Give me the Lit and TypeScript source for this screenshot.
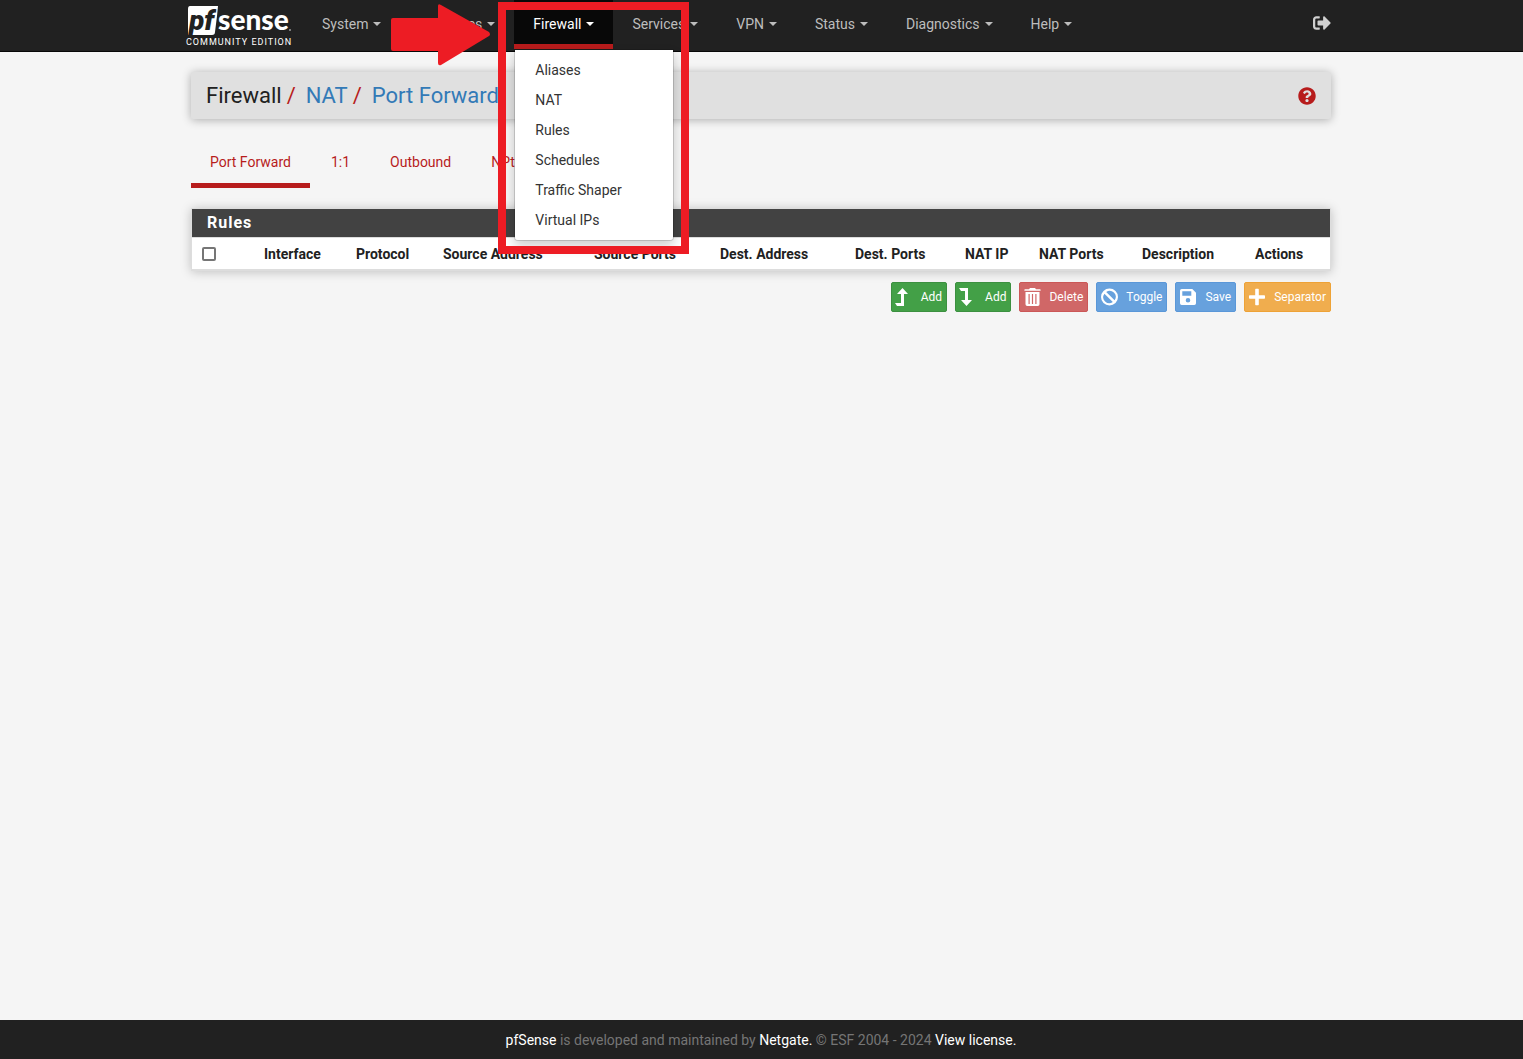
import { LitElement, html, css, svg } from "lit";
import { customElement } from "lit/decorators.js";

const icons = {
  up: svg`<path d="M6.500 0 12 6H8v12H1l-2-3H5V6H1z"/>`,
  down: svg`<path d="M-1 0H8v12h4l-5.500 6L1 12h4V3H1z"/>`,
  trash: svg`<path fill-rule="evenodd" d="M6 0h5l1 1.200h4a.6.6 0 0 1 .6.6v1H.4v-1A.6.6 0 0 1 1 1.200h4zM1.500 4h14v12.300a1.700 1.700 0 0 1-1.700 1.700H3.200a1.700 1.700 0 0 1-1.700-1.700zM4.500 6v10h1.200V6zM7.900 6v10h1.200V6zM11.300 6v10h1.200V6z"/>`,
  ban: svg`<path fill-rule="evenodd" d="M9 0a9 9 0 1 1 0 18A9 9 0 0 1 9 0zM5.500 3.600l8.900 8.900A6.400 6.400 0 0 0 5.500 3.600zM3.600 5.500a6.400 6.400 0 0 0 8.900 8.900z"/>`,
  save: svg`<path fill-rule="evenodd" d="M1.700 1h10.600L16 4.700v10.600a1.700 1.700 0 0 1-1.700 1.700H1.700A1.700 1.700 0 0 1 0 15.300V2.700A1.700 1.700 0 0 1 1.700 1zM2.300 3.300v4.400h9V3.300zM8 10a2.300 2.300 0 1 0 0 4.600A2.300 2.300 0 0 0 8 10z"/>`,
  plus: svg`<path d="M6.200 1.500a.7.7 0 0 1 .7-.7h2.200a.7.7 0 0 1 .7.7v5.700h5.500a.7.700 0 0 1 .7.7v2.200a.7.700 0 0 1-.7.7H9.800v5.700a.7.700 0 0 1-.7.7H6.900a.7.700 0 0 1-.7-.7v-5.700H.7a.7.700 0 0 1-.7-.7V7.900a.7.700 0 0 1 .7-.7h5.500z"/>`,
};

const menus = ["System", "Interfaces", "Firewall", "Services", "VPN", "Status", "Diagnostics", "Help"];
const firewallItems = ["Aliases", "NAT", "Rules", "Schedules", "Traffic Shaper", "Virtual IPs"];
const tabs = ["Port Forward", "1:1", "Outbound", "NPt"];
const columns: [string, string][] = [
  ["iface", "Interface"],
  ["proto", "Protocol"],
  ["saddr", "Source Address"],
  ["sport", "Source Ports"],
  ["daddr", "Dest. Address"],
  ["dport", "Dest. Ports"],
  ["natip", "NAT IP"],
  ["natport", "NAT Ports"],
  ["descr", "Description"],
  ["act", "Actions"],
];
const actions: { label: string; icon: keyof typeof icons; tone: string }[] = [
  { label: "Add", icon: "up", tone: "success" },
  { label: "Add", icon: "down", tone: "success" },
  { label: "Delete", icon: "trash", tone: "danger" },
  { label: "Toggle", icon: "ban", tone: "primary" },
  { label: "Save", icon: "save", tone: "primary" },
  { label: "Separator", icon: "plus", tone: "warning" },
];

@customElement("app-root")
export class AppRoot extends LitElement {
  static styles = css`
    :host {
      display: flex;
      flex-direction: column;
      min-height: 100vh;
      background: #f5f5f5;
      color: #212121;
      font: 14px/20px Roboto, "Liberation Sans", sans-serif;
    }
    * { box-sizing: border-box; }
    a { text-decoration: none; color: inherit; }
    ul, ol { list-style: none; margin: 0; padding: 0; }
    .container { width: 100%; max-width: 1171px; margin: 0 auto; padding: 0 16px 0 15px; }

    .navbar { background: #212121; border-bottom: 1px solid #080808; color: #bdbdbd; }
    .bar { display: flex; height: 51px; padding-left: 9px; }
    .brand { display: block; flex: none; width: 108px; height: 48px; margin-right: 10px; }
    .brand svg { display: block; }
    .menus { display: flex; flex: 1; }
    .menu { position: relative; }
    .toggle {
      display: flex; align-items: center; gap: 5px; height: 49px; padding: 4px 19px 0;
      border: 0; border-bottom: 5px solid transparent; background: none;
      color: inherit; font: inherit;
    }
    .caret { border: 4px solid transparent; border-top-color: currentColor; border-bottom: 0; }
    .open .toggle { background: #080808; border-bottom-color: #b71c1c; color: #fff; }
    .dropdown {
      position: absolute; top: 49px; left: 0; z-index: 2; width: 160px; padding: 5px 0;
      background: #fff; background-clip: padding-box; border: 1px solid rgba(0, 0, 0, 0.15);
      border-radius: 0 0 4px 4px; box-shadow: 0 6px 12px rgba(0, 0, 0, 0.18); color: #333;
    }
    .dropdown a { display: block; padding: 5px 20px; }
    .frame {
      position: absolute; top: 2px; left: -16px; z-index: 3; width: 191px; height: 252px;
      border: 8px solid #ed1c24; pointer-events: none;
    }
    .arrow { position: absolute; top: 4px; left: -123px; z-index: 3; fill: #ed1c24; pointer-events: none; }
    .logout { display: flex; align-items: center; height: 46px; }
    .logout svg { display: block; fill: #d0d0d0; }

    .main { flex: 1; }
    .crumbs {
      display: flex; align-items: center; justify-content: space-between;
      height: 47px; margin-top: 20px; padding: 0 15px; background: #e0e0e0;
      border-radius: 2px; box-shadow: 0 1px 10px rgba(0, 0, 0, 0.3);
    }
    .trail { display: flex; font-size: 22px; line-height: 28px; color: #337ab7; }
    .trail li + li::before { content: "/"; color: #b71c1c; padding: 0 10px 0 5px; }
    .current { color: #212121; }
    .help svg { display: block; fill: #b71c1c; }

    .tabs { display: flex; gap: 2px; margin: 17px 0 20px; color: #b71c1c; }
    .tabs a { display: block; height: 52px; padding: 16px 19px 0; border-bottom: 5px solid transparent; }
    .tabs .active { border-bottom-color: #b71c1c; }

    .panel { border: 1px solid #ddd; border-bottom-width: 2px; background: #fff; box-shadow: 0 1px 10px rgba(0, 0, 0, 0.22); }
    .title {
      margin: 0; height: 28px; padding: 0 15px; background: #424242; color: #fff;
      font-size: 16px; line-height: 28px; font-weight: 700; letter-spacing: 1px;
    }
    .rules { width: 100%; table-layout: fixed; border-collapse: collapse; border-top: 1px solid #ddd; }
    th { height: 31px; padding: 2px 0 0 5px; text-align: left; font-weight: 700; white-space: nowrap; }
    .c-check { width: 67px; } .c-iface { width: 92px; } .c-proto { width: 87px; }
    .c-saddr { width: 151px; } .c-sport { width: 126px; } .c-daddr { width: 135px; }
    .c-dport { width: 110px; } .c-natip { width: 74px; } .c-natport { width: 103px; }
    .c-descr { width: 113px; } .c-act { width: 80px; }
    .check {
      display: block; appearance: none; width: 14px; height: 14px; margin: 0 5px;
      border: 2px solid #767676; border-radius: 2px; background: #fff;
    }

    .actions { display: flex; justify-content: flex-end; gap: 8px; margin-top: 11px; }
    .btn {
      display: flex; align-items: center; gap: 8px; height: 30px; padding: 0 4px;
      border: 1px solid; border-radius: 2px; color: #fff; font: 12px/18px Roboto, "Liberation Sans", sans-serif;
    }
    .btn svg { fill: #fff; flex: none; overflow: visible; }
    .success { background: #43a047; border-color: #3c9040; }
    .danger { background: #d06767; border-color: #cb5757; }
    .primary { background: #67a1dd; border-color: #5a97d8; }
    .warning { background: #f0ad4e; border-color: #eea236; }

    .footer { padding: 10px 16px 9px 15px; background: #212121; color: #757575; text-align: center; }
    .footer a { color: #fff; }
  `;

  private renderMenu(name: string) {
    const open = name === "Firewall";
    return html`<li class="menu ${open ? "open" : ""}">
      <button class="toggle" aria-haspopup="true" aria-expanded=${open}>${name}<span class="caret"></span></button>
      ${open
        ? html`<ul class="dropdown">${firewallItems.map((i) => html`<li><a href="#">${i}</a></li>`)}</ul>
            <div class="frame"></div>
            <svg class="arrow" width="100" height="62" viewBox="0 0 100 62"><path d="M2 14h45V2q0-3 3-1l48 27q2 2.500 0 4L50 61q-3 1-3-2V47H2q-2 0-2-2V16q0-2 2-2z"/></svg>`
        : ""}
    </li>`;
  }

  render() {
    return html`
      <header class="navbar">
        <nav class="container bar">
          <a class="brand" href="#" aria-label="pfSense Community Edition">
            <svg width="108" height="48" viewBox="0 0 108 48">
              <path fill="#fff" d="M5 6h28l-1 10-2 16q0 3-3 3H3V9q0-3 2-3z"/>
              <text x="4" y="30" font-family="Roboto" font-style="italic" font-weight="900" font-size="28" fill="#212121">pf</text>
              <text x="33" y="30" font-family="Lato" font-weight="900" font-size="28" fill="#fff">sense</text>
              <circle cx="105" cy="30" r="1" fill="#999"/>
              <text x="1" y="45" font-family="Roboto" font-size="9" letter-spacing="1" fill="#fff">COMMUNITY EDITION</text>
            </svg>
          </a>
          <ul class="menus">${menus.map((m) => this.renderMenu(m))}</ul>
          <a class="logout" href="#" aria-label="Logout">
            <svg width="18" height="18" viewBox="0 0 512 512"><path d="M497 273L329 441c-15 15-41 4.500-41-17v-96H152c-13.300 0-24-10.700-24-24v-96c0-13.300 10.700-24 24-24h136V88c0-21.400 25.900-32 41-17l168 168c9.300 9.400 9.300 24.600 0 34zM192 436v-40c0-6.600-5.400-12-12-12H96c-17.700 0-32-14.300-32-32V160c0-17.700 14.300-32 32-32h84c6.600 0 12-5.400 12-12V76c0-6.600-5.400-12-12-12H96c-53 0-96 43-96 96v192c0 53 43 96 96 96h84c6.600 0 12-5.400 12-12z"/></svg>
          </a>
        </nav>
      </header>
      <main class="main container">
        <div class="crumbs">
          <ol class="trail">
            <li class="current">Firewall</li>
            <li><a href="#">NAT</a></li>
            <li><a href="#">Port Forward</a></li>
          </ol>
          <a class="help" href="#" aria-label="Help">
            <svg width="18" height="18" viewBox="0 0 512 512"><path d="M504 256c0 136.997-111.043 248-248 248S8 392.997 8 256C8 119.083 119.043 8 256 8s248 111.083 248 248zM262.655 90c-54.497 0-89.255 22.957-116.549 63.758-3.536 5.286-2.353 12.415 2.715 16.258l34.699 26.310c5.205 3.947 12.621 3.008 16.665-2.122 17.864-22.658 30.113-35.797 57.303-35.797 20.429 0 45.698 13.148 45.698 32.958 0 14.976-12.363 22.667-32.534 33.976C247.128 238.528 216 254.941 216 296v4c0 6.627 5.373 12 12 12h56c6.627 0 12-5.373 12-12v-1.333c0-28.462 83.186-29.647 83.186-106.667 0-58.002-60.165-102-116.531-102zM256 338c-25.365 0-46 20.635-46 46 0 25.364 20.635 46 46 46s46-20.636 46-46c0-25.365-20.635-46-46-46z"/></svg>
          </a>
        </div>
        <nav class="tabs">${tabs.map((t, i) => html`<a href="#" class=${i === 0 ? "active" : ""}>${t}</a>`)}</nav>
        <section class="panel">
          <h2 class="title">Rules</h2>
          <table class="rules">
            <thead>
              <tr>
                <th class="c-check"><input class="check" type="checkbox" aria-label="Select all rules" /></th>
                ${columns.map(([key, label]) => html`<th class="c-${key}" scope="col">${label}</th>`)}
              </tr>
            </thead>
          </table>
        </section>
        <div class="actions">
          ${actions.map(
            (a) => html`<button class="btn ${a.tone}">
              <svg width="17" height="18" viewBox=${a.icon === "ban" ? "0 0 18 18" : "0 0 17 18"}>${icons[a.icon]}</svg>${a.label}
            </button>`
          )}
        </div>
      </main>
      <footer class="footer">
        <a href="#">pfSense</a> is developed and maintained by <a href="#">Netgate.</a> © ESF 2004 - 2024 <a href="#">View license.</a>
      </footer>
    `;
  }
}
